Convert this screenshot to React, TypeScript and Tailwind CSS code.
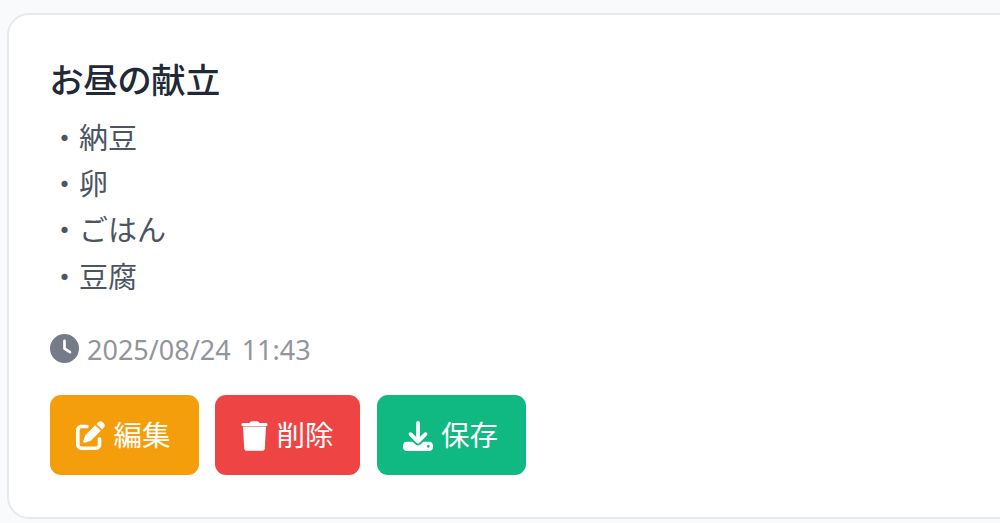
import React from 'react';
import { FaClock, FaDownload, FaPenToSquare } from 'react-icons/fa6';

const items = ['納豆', '卵', 'ごはん', '豆腐'];

const TrashIcon: React.FC<{ className?: string }> = ({ className }) => (
  <svg viewBox="0 0 27 30" fill="currentColor" className={className} aria-hidden="true">
    <path d="M8.5 2 9.5.8Q10 .2 11 .2h5q1 0 1.5.6l1 1.2H25q1.6 0 1.6 1.6T25 5.2H2Q.4 5.2.4 3.6T2 2Z" />
    <path d="M2 5.8h23l-1.2 21.4q-.2 2.6-2.8 2.6H6q-2.6 0-2.8-2.6Z" />
  </svg>
);

const App: React.FC = () => {
  return (
    <div className="h-[523px] overflow-hidden bg-[#f8fafc] pt-[13px] pl-[7px] font-['Noto_Sans','Noto_Sans_CJK_JP',sans-serif]">
      <article className="h-[506px] w-[1040px] rounded-[22px] border-2 border-[#e7e9ed] bg-white px-[41px] pt-[42px]">
        <h2 className="h-[46px] text-[34.6px] leading-[46px] font-medium text-[#1f2937] [font-feature-settings:'palt']">お昼の献立</h2>
        <ul className="mt-3 text-[29px] leading-[46.2px] text-[#4b5563]">
          {items.map((item) => (
            <li key={item}>・{item}</li>
          ))}
        </ul>
        <div className="mt-[28px] flex h-[42px] items-center gap-2 text-[27px] text-[#92959b]">
          <FaClock className="h-[29px] w-[29px] text-[#757b87]" />
          <span className="pt-[2px] [word-spacing:4px]">2025/08/24 11:43</span>
        </div>
        <div className="mt-[25px] flex gap-4 text-[28.5px] text-white">
          <button className="flex h-20 w-[149px] items-center justify-center gap-2 rounded-[11px] bg-[#f59e0b] pt-[2px] pr-[2px]">
            <FaPenToSquare className="h-[29px] w-[29px]" />
            編集
          </button>
          <button className="flex h-20 w-[145px] items-center justify-center gap-2 rounded-[11px] bg-[#ef4444] pt-[2px]">
            <TrashIcon className="h-[30px] w-[27px]" />
            削除
          </button>
          <button className="ml-px flex h-20 w-[149px] items-center justify-center gap-2 rounded-[11px] bg-[#10b981] pt-[2px] pr-[2px]">
            <FaDownload className="h-[30px] w-[30px]" />
            保存
          </button>
        </div>
      </article>
    </div>
  );
};

export default App;
